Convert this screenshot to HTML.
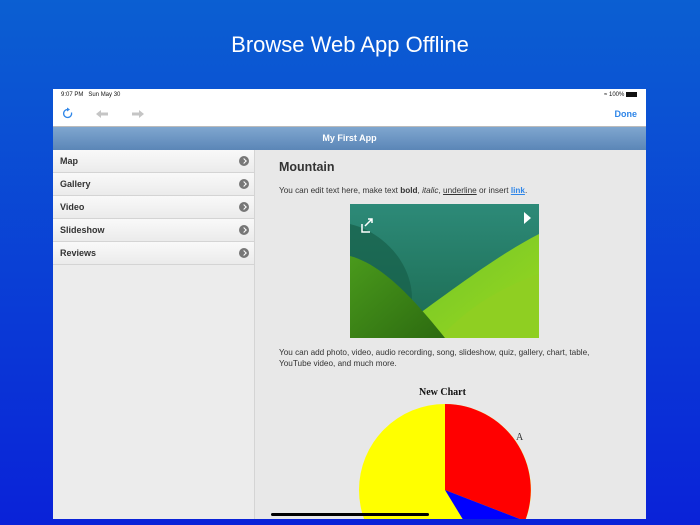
<!DOCTYPE html>
<html style="overflow:hidden;width:700px;height:525px"><head><style>
*{margin:0;padding:0;box-sizing:border-box}
body{width:700px;height:525px;overflow:hidden;background:linear-gradient(#0b5fd2,#0a22d8);font-family:"Liberation Sans",sans-serif;position:relative}
.title{position:absolute;top:32px;width:100%;text-align:center;color:#fff;font-size:22px}
.dev{position:absolute;left:53px;top:89px;width:593px;height:430px;background:#e8e8e8;overflow:hidden}
.top{position:absolute;left:0;top:0;width:593px;height:38px;background:#fff;border-bottom:1px solid #bbb}
.hdr{position:absolute;left:0;top:38px;width:593px;height:23px;background:linear-gradient(#7fa6cf,#5b86b7);color:#fff;font-size:9px;font-weight:bold;text-align:center;line-height:23px}
.side{position:absolute;left:0;top:61px;width:202px;height:369px;background:#ececec;border-right:1px solid #d4d4d4}
.item{height:23px;border-bottom:1px solid #d4d4d4;background:linear-gradient(#f9f9f9,#ebebeb);font-size:9px;font-weight:bold;color:#333;line-height:22px;padding-left:7px;position:relative}
.item i{position:absolute;right:5px;top:6px;width:10px;height:10px;border-radius:50%;background:#777}
.item i:after{content:"";position:absolute;left:3px;top:3px;width:3px;height:3px;border-top:1.3px solid #fff;border-right:1.3px solid #fff;transform:rotate(45deg)}
.c{position:absolute;left:226px;font-size:8.2px;color:#333}
</style></head><body>
<div class="title">Browse Web App Offline</div>
<div class="dev">
<div class="top">
<div style="position:absolute;left:8px;top:3px;font-size:6px;color:#111">9:07 PM&nbsp;&nbsp;&nbsp;Sun May 30</div>
<div style="position:absolute;right:9px;top:3px;font-size:6px;color:#111">&#8776; 100% <span style="display:inline-block;width:11px;height:5px;background:#111;vertical-align:middle"></span></div>
<svg style="position:absolute;left:9px;top:18px" width="12" height="13" viewBox="0 0 12 13"><path d="M9.5 5.5A4 4 0 1 1 6 2.5" fill="none" stroke="#2f86e8" stroke-width="1.3"/><path d="M5 0.5L8 2.5L5 4.5z" fill="#2f86e8"/></svg>
<svg style="position:absolute;left:43px;top:21px" width="12" height="8"><path d="M0 4L5 0V2.5H12V5.5H5V8z" fill="#c5c5c5"/></svg>
<svg style="position:absolute;left:79px;top:21px" width="12" height="8"><path d="M12 4L7 0V2.5H0V5.5H7V8z" fill="#c5c5c5"/></svg>
<div style="position:absolute;right:9px;top:20px;font-size:9px;color:#2f86e8;font-weight:bold">Done</div>
</div>
<div class="hdr">My First App</div>
<div class="side">
<div class="item">Map<i></i></div><div class="item">Gallery<i></i></div><div class="item">Video<i></i></div><div class="item">Slideshow<i></i></div><div class="item">Reviews<i></i></div>
</div>
<div class="c" style="top:71px;font-size:12.5px;font-weight:bold;color:#333">Mountain</div>
<div class="c" style="top:97px">You can edit text here, make text <b>bold</b>, <i>italic</i>, <u>underline</u> or insert <b style="color:#2f86e8;text-decoration:underline">link</b>.</div>
<svg style="position:absolute;left:297px;top:115px" width="189" height="134" viewBox="0 0 189 134">
<defs><linearGradient id="s" x1="0" y1="0" x2="0" y2="1"><stop offset="0" stop-color="#2d8a78"/><stop offset="1" stop-color="#1b6a50"/></linearGradient>
<linearGradient id="g1" x1="0" y1="0" x2="1" y2="1"><stop offset="0" stop-color="#6fc42a"/><stop offset="1" stop-color="#9ad81e"/></linearGradient>
<linearGradient id="g2" x1="0" y1="0" x2="1" y2="1"><stop offset="0" stop-color="#4a9a1c"/><stop offset="1" stop-color="#2c6a10"/></linearGradient></defs>
<rect width="189" height="134" fill="url(#s)"/>
<path d="M0 20C40 30 70 70 60 110L0 100Z" fill="#17604a" opacity=".7"/>
<path d="M55 120C110 80 150 50 189 30V134H55Z" fill="url(#g1)"/>
<path d="M90 134C120 100 160 80 189 70V134Z" fill="#8fcf22"/>
<path d="M0 52C30 60 60 90 95 134H0Z" fill="url(#g2)"/>
<path d="M12 20V28H20" fill="none" stroke="#fff" stroke-width="1.5"/><path d="M15 22L22 15M18 15H22V19" fill="none" stroke="#fff" stroke-width="1.5"/>
<path d="M174 8L181 14L174 20z" fill="#fff"/>
</svg>
<div class="c" style="top:258px;width:320px;line-height:11px">You can add photo, video, audio recording, song, slideshow, quiz, gallery, chart, table, YouTube video, and much more.</div>
<div style="position:absolute;left:366px;top:298px;font:bold 10px 'Liberation Serif',serif;color:#111">New Chart</div>
<svg style="position:absolute;left:297px;top:310px" width="200" height="120">
<circle cx="95" cy="91" r="86" fill="#ff0"/>
<path d="M95 91V5A86 86 0 0 1 175 122Z" fill="#f00"/>
<path d="M95 91L175 122A86 86 0 0 1 140 165Z" fill="#00f"/>
<text x="166" y="41" font-family="Liberation Serif" font-size="10" fill="#333">A</text>
</svg>
<div style="position:absolute;left:218px;top:424px;width:158px;height:3px;background:#000;border-radius:2px"></div>
</div>
</body></html>
